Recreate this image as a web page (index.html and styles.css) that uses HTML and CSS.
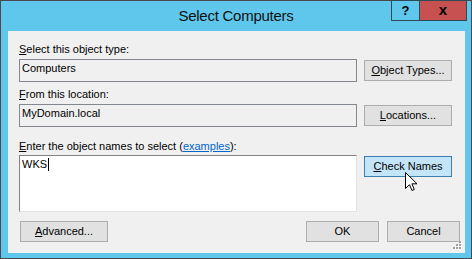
FILE: index.html
```html
<!DOCTYPE html>
<html>
<head>
<meta charset="utf-8">
<title>Select Computers</title>
<link rel="stylesheet" href="styles.css">
</head>
<body>
<div class="window">
  <div class="titlebar">
    <div class="title">Select Computers</div>
    <div class="caption-btns">
      <div class="cap help">?</div>
      <div class="cap close">x</div>
    </div>
  </div>
  <div class="client">
    <div class="label"><u>S</u>elect this object type:</div>
    <div class="row">
      <div class="textbox">Computers</div>
      <div class="btn"><u>O</u>bject Types...</div>
    </div>
    <div class="label label2"><u>F</u>rom this location:</div>
    <div class="row">
      <div class="textbox">MyDomain.local</div>
      <div class="btn"><u>L</u>ocations...</div>
    </div>
    <div class="label label3"><u>E</u>nter the object names to select (<span class="link">examples</span>):</div>
    <div class="row row3">
      <div class="textarea">WKS<span class="caret"></span></div>
      <div class="btn hover"><u>C</u>heck Names</div>
    </div>
    <div class="bottom">
      <div class="btn adv"><u>A</u>dvanced...</div>
      <div class="spacer"></div>
      <div class="btn small">OK</div>
      <div class="btn small">Cancel</div>
    </div>
    <svg class="grip" width="11" height="11" viewBox="0 0 11 11">
      <g fill="#ffffff">
        <rect x="8" y="2" width="2" height="2"/>
        <rect x="5" y="5" width="2" height="2"/><rect x="8" y="5" width="2" height="2"/>
        <rect x="2" y="8" width="2" height="2"/><rect x="5" y="8" width="2" height="2"/><rect x="8" y="8" width="2" height="2"/>
      </g>
      <g fill="#a0a0a0">
        <rect x="7" y="1" width="2" height="2"/>
        <rect x="4" y="4" width="2" height="2"/><rect x="7" y="4" width="2" height="2"/>
        <rect x="1" y="7" width="2" height="2"/><rect x="4" y="7" width="2" height="2"/><rect x="7" y="7" width="2" height="2"/>
      </g>
    </svg>
    <svg class="cursor" width="13" height="20" viewBox="0 0 13 20">
      <path d="M0.5 0.5 L0.5 16.5 L4.5 12.7 L7 18.5 L9.3 17.5 L6.9 11.8 L12 11.8 Z" fill="#ffffff" stroke="#000000" stroke-width="1" stroke-linejoin="miter"/>
    </svg>
  </div>
</div>
</body>
</html>
```

FILE: styles.css
```css
html, body {
  margin: 0;
  padding: 0;
  background: #ffffff;
}

.window {
  width: 472px;
  height: 259px;
  box-sizing: border-box;
  border: 1px solid #4a4a4a;
  background: #5fc7eb;
  display: flex;
  flex-direction: column;
  font-family: "Liberation Sans", Arial, sans-serif;
  font-size: 11px;
  color: #000000;
}

.titlebar {
  height: 30px;
  flex: none;
  display: grid;
  grid-template-columns: 1fr auto 1fr;
}

.title {
  grid-column: 2;
  font-size: 15px;
  line-height: 30px;
  letter-spacing: -0.25px;
  color: #111111;
  white-space: nowrap;
}

.caption-btns {
  grid-column: 3;
  justify-self: end;
  align-self: start;
  display: flex;
  margin-right: 4px;
  margin-top: -1px;
  border: 1px solid #2c4a58;
  height: 21px;
  box-sizing: border-box;
}

.cap {
  font-family: "Liberation Sans", Arial, sans-serif;
  font-weight: bold;
  text-align: center;
  line-height: 19px;
  color: #000000;
}

.help {
  width: 27px;
  border-right: 1px solid #2c4a58;
  font-size: 13px;
  background: #5fc7eb;
}

.close {
  width: 46px;
  font-size: 15px;
  line-height: 18px;
  background: #c75050;
}

.client {
  flex: 1;
  margin: 0 6px 5px 7px;
  background: #f0f0f0;
  padding: 12px 0 0 11px;
  position: relative;
  box-sizing: border-box;
}

.label {
  line-height: 13px;
  height: 13px;
  white-space: nowrap;
}

.label2 {
  margin-top: 6px;
}

.label3 {
  margin-top: 13px;
}

.link {
  color: #0066cc;
  text-decoration: underline;
}

.row {
  display: flex;
  gap: 7px;
  margin-top: 3px;
  align-items: flex-start;
}

.row3 {
  margin-top: 2px;
}

.textbox {
  width: 338px;
  height: 23px;
  box-sizing: border-box;
  border: 1px solid #828790;
  background: #f0f0f0;
  padding: 2px 2px;
  line-height: 13px;
}

.textarea {
  width: 338px;
  height: 57px;
  box-sizing: border-box;
  border: 1px solid #e3e3e3;
  border-top-color: #828282;
  border-left-color: #828282;
  background: #ffffff;
  padding: 1px 2px;
  line-height: 13px;
  padding-top: 2px;
}

.caret {
  display: inline-block;
  width: 0;
  height: 13px;
  border-left: 1px solid #000000;
  margin-left: 1px;
  vertical-align: top;
}

.btn {
  width: 88px;
  height: 21px;
  box-sizing: border-box;
  margin-top: 1px;
  border: 1px solid #adadad;
  background: #e1e1e1;
  text-align: center;
  line-height: 19px;
  white-space: nowrap;
}

.btn.hover {
  background: #c4e5f8;
  border-color: #3c7fb1;
}

.bottom {
  display: flex;
  gap: 8px;
  margin-top: 9px;
  width: 441px;
}

.bottom .btn {
  margin-top: 0;
}

.btn.adv {
  margin-left: 1px;
}

.btn.small {
  width: 73px;
}

.spacer {
  flex: 1;
}

.grip {
  position: absolute;
  right: 2px;
  bottom: 2px;
}

.cursor {
  position: absolute;
  left: 397px;
  top: 141px;
}
```
